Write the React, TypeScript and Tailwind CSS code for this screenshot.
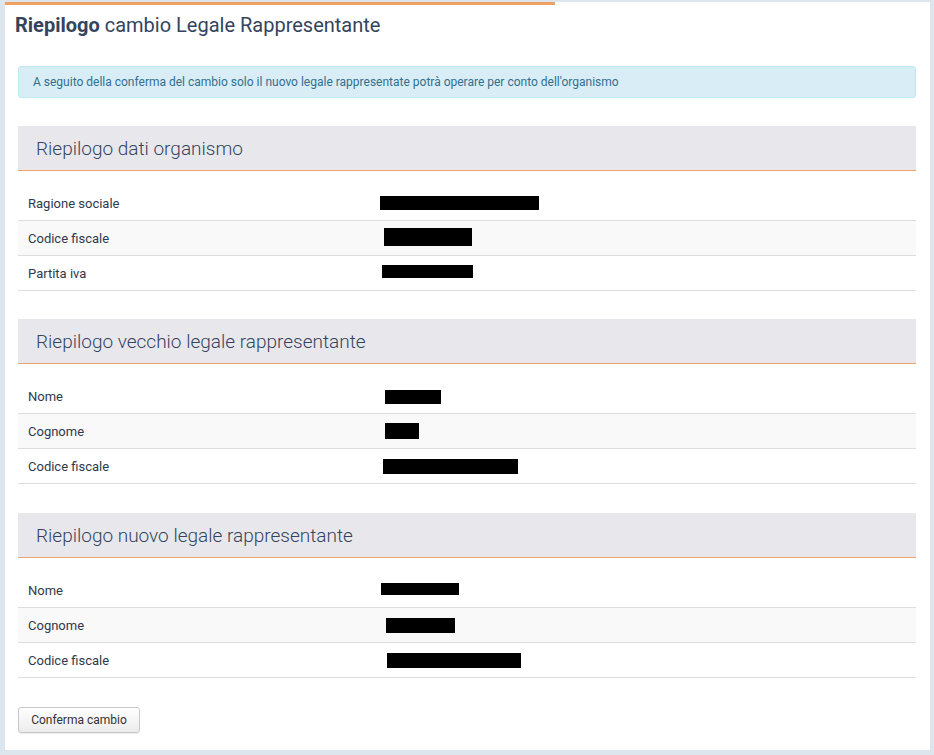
import React from "react";

type Row = { label: string; w: number; h: number; dx: number; dy: number };

const Section = ({ title, rows }: { title: string; rows: Row[] }) => (
  <div>
    <div className="h-[45px] bg-[#e8e8ec] border-b border-solid border-b-[#f0a469] flex items-center pl-[18px]">
      <h2 className="text-[19px] font-light text-[#34445d] leading-none">{title}</h2>
    </div>
    <div className="pt-[15px]">
      {rows.map((r, i) => (
        <div
          key={i}
          className={`h-[35px] flex items-center border-b border-[#dddddd] ${i % 2 === 1 ? "bg-[#f9f9f9]" : "bg-white"}`}
        >
          <div className="w-[352px] pl-[10px] pt-[2px] text-[13px] text-[#2e3a4d]">{r.label}</div>
          <div className="flex-1 relative h-full">
            <div
              className="absolute bg-black"
              style={{ left: r.dx, top: r.dy, width: r.w, height: r.h }}
            />
          </div>
        </div>
      ))}
    </div>
  </div>
);

export default function App() {
  return (
    <div className="w-[934px] h-[755px] bg-[#dde5ed] pt-[2px] pl-[5px] font-['Roboto','Liberation_Sans',sans-serif]">
      <div className="w-[925px] h-[748px] bg-white relative">
        <div className="absolute left-0 top-0 w-[550px] h-[3px] bg-[#efa165]" />
        <div className="pt-[11px] pl-[10px]">
          <h1 className="text-[20px] text-[#34445d] leading-[24px]">
            <span className="font-bold">Riepilogo</span> cambio Legale Rappresentante
          </h1>
        </div>
        <div className="px-[13px] pr-[14px]">
          <div className="mt-[29px] h-[32px] bg-[#d9edf7] border border-[#bce8f1] rounded-[3px] flex items-center pl-[14px] text-[12px] text-[#31708f]">
            A seguito della conferma del cambio solo il nuovo legale rappresentate potrà operare per conto dell'organismo
          </div>
          <div className="mt-[28px] flex flex-col gap-[28px]">
            <Section
              title="Riepilogo dati organismo"
              rows={[
                { label: "Ragione sociale", w: 159, h: 14, dx: 10, dy: 10 },
                { label: "Codice fiscale", w: 88, h: 18, dx: 14, dy: 7 },
                { label: "Partita iva", w: 91, h: 13, dx: 12, dy: 9 },
              ]}
            />
            <Section
              title="Riepilogo vecchio legale rappresentante"
              rows={[
                { label: "Nome", w: 56, h: 14, dx: 15, dy: 11 },
                { label: "Cognome", w: 34, h: 16, dx: 15, dy: 9 },
                { label: "Codice fiscale", w: 135, h: 15, dx: 13, dy: 10 },
              ]}
            />
            <div className="pt-[1px]">
              <Section
                title="Riepilogo nuovo legale rappresentante"
                rows={[
                  { label: "Nome", w: 78, h: 12, dx: 11, dy: 10 },
                  { label: "Cognome", w: 69, h: 15, dx: 16, dy: 10 },
                  { label: "Codice fiscale", w: 134, h: 15, dx: 17, dy: 10 },
                ]}
              />
            </div>
          </div>
          <button className="mt-[29px] h-[26px] w-[122px] rounded-[3px] border border-[#c8c8c8] bg-gradient-to-b from-white to-[#ececec] text-[12px] text-[#333] shadow-[0_1px_1px_rgba(0,0,0,0.08)]">
            Conferma cambio
          </button>
        </div>
      </div>
    </div>
  );
}
